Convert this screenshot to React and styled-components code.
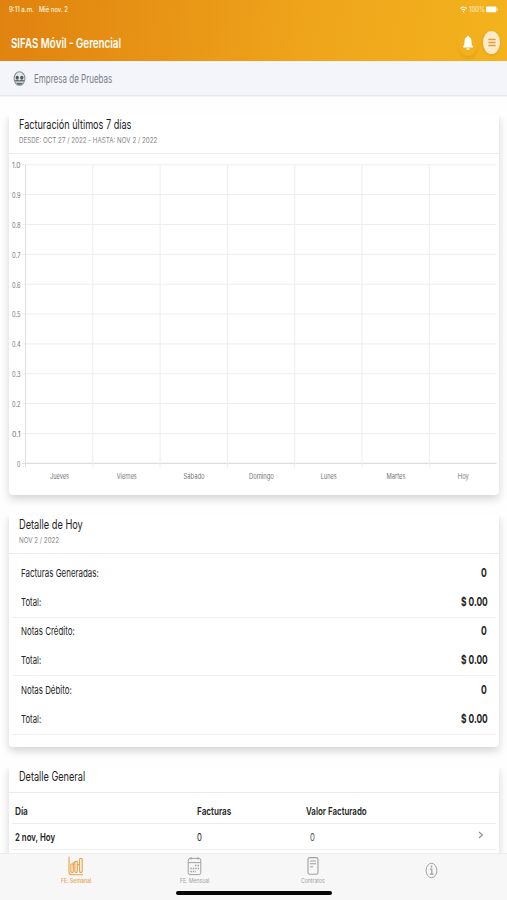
import React, { useLayoutEffect, useRef, useState } from 'react';
import styled, { createGlobalStyle } from 'styled-components';


const GlobalStyle = createGlobalStyle`
*{
    box-sizing:border-box;
}
body{
    margin:0;
    background-color:#fefefe;
    font-family:Inter,"Liberation Sans",sans-serif;
    overflow:hidden;
}
`;

const Screen = styled.div`
display:flex;
flex-direction:column;
width:507px;
height:900px;
overflow:hidden;
`;

const Header = styled.header`
flex:none;
height:61px;
background:linear-gradient(98deg,#e0820f 0%,#efa51b 62%,#f3b31d 100%);
color:white;
`;

const StatusBar = styled.div`
display:flex;
align-items:center;
justify-content:space-between;
height:18px;
padding:0 9px;
color:#fff3dc;

.side{
    display:flex;
    align-items:center;
    gap:2px;
}
.left{
    gap:5px;
}
`;

const TitleBar = styled.div`
display:flex;
align-items:center;
justify-content:space-between;
height:49px;
padding:0 7px 0 11px;

.actions{
    display:flex;
    align-items:center;
    gap:5px;
}
`;

const RoundButton = styled.button`
display:flex;
align-items:center;
justify-content:center;
width:${(props) => (props.$light ? 17 : 20)}px;
height:${(props) => (props.$light ? 23 : 27)}px;
padding:0;
border:0;
border-radius:50%;
background-color:${(props) => (props.$light ? '#fcebcb' : 'transparent')};
box-shadow:${(props) => (props.$light ? '0 1px 3px rgba(170,100,0,.22)' : '0 3px 3px rgba(170,100,0,.16)')};
`;

const CompanyBar = styled.div`
flex:none;
display:flex;
align-items:center;
gap:8px;
height:35px;
padding:2px 13px 0;
background-color:#f3f5fa;
border-bottom:1px solid #e4e7ec;
box-shadow:0 1px 1px rgba(0,0,0,.04);
color:#7c8088;
`;

const Content = styled.main`
flex:1;
display:flex;
flex-direction:column;
gap:18px;
min-height:0;
padding:17px 8px 0 9px;
overflow:hidden;
`;

const Card = styled.section`
flex:none;
height:${(props) => props.$height}px;
background-color:white;
border-radius:4px;
box-shadow:0 4px 9px rgba(0,0,0,.17);
clip-path:inset(3px -12px -18px -12px);
`;

const CardHeader = styled.div`
display:flex;
flex-direction:column;
height:${(props) => (props.$small ? 28 : 41)}px;
padding:4px 9.5px 0;
border-bottom:1px solid #ebebeb;
color:#1e1e1e;

.sub{
    display:flex;
    padding-top:1px;
    color:#858585;
}
`;

const Group = styled.div`
height:${(props) => props.$height}px;
margin:0 3px;
padding:${(props) => props.$top}px 9px 0;
border-bottom:1px solid #f0f0f0;
`;

const Line = styled.div`
display:flex;
align-items:center;
justify-content:space-between;
height:29px;
padding-bottom:2px;
color:#242424;
`;

const TableRow = styled.div`
display:grid;
grid-template-columns:182px 109px 1fr 9px;
align-items:center;
height:${(props) => props.$height}px;
margin:0 3px;
padding:${(props) => props.$top}px 9px 0 3px;
border-bottom:1px solid #ececec;
color:#242424;

.value{
    color:#555;
    padding-left:${(props) => props.$indent || 0}px;
}
`;

const TabBar = styled.nav`
flex:none;
height:47px;
background-color:#f7f7f7;
border-top:1px solid #ececec;
display:flex;
flex-direction:column;
align-items:center;

.tabs{
    display:grid;
    grid-template-columns:repeat(4,118.6px);
    width:100%;
    height:37px;
    padding-left:16.5px;
}
.home{
    width:156px;
    height:4px;
    border-radius:2px;
    background-color:#050505;
}
`;

const Tab = styled.div`
display:flex;
flex-direction:column;
align-items:center;
justify-content:${(props) => (props.$alone ? 'center' : 'flex-start')};
gap:1px;
padding-top:${(props) => (props.$alone ? 0 : 2)}px;
padding-bottom:${(props) => (props.$alone ? 4 : 0)}px;
color:${(props) => (props.$active ? '#eba145' : '#a0a0a0')};
`;

const LabelBox = styled.span`
display:block;
flex:none;
width:${(props) => props.$width}px;
height:${(props) => props.$line}px;
line-height:${(props) => props.$line}px;
font-size:${(props) => props.$size}px;
font-weight:${(props) => props.$weight};

span{
    display:inline-block;
    white-space:nowrap;
    transform-origin:0 50%;
}
`;

// Condenses its text so that it fills the given width
const Label = ({ width, size, weight = 400, line, children }) => {
    const text = useRef(null);
    const [scale, setScale] = useState(1);

    useLayoutEffect(() => {
        setScale(width / text.current.offsetWidth);
    }, [width, children]);

    return (
        <LabelBox $width={width} $size={size} $weight={weight} $line={line || Math.round(size * 1.3)}>
            <span ref={text} style={{ transform: `scaleX(${scale})` }}>{children}</span>
        </LabelBox>
    );
};

const days = [
    ['Jueves', 19], ['Viernes', 20], ['Sábado', 21], ['Domingo', 25],
    ['Lunes', 16], ['Martes', 19], ['Hoy', 11],
];
const ticks = ['1.0', '0.9', '0.8', '0.7', '0.6', '0.5', '0.4', '0.3', '0.2', '0.1', '0'];

const ChartSvg = styled.svg`
display:block;

text{
    font-size:7.4px;
    fill:#727272;
}
`;

const Chart = () => (
    <ChartSvg width="490" height="340" viewBox="0 0 490 340">
        {ticks.map((t, i) => (
            <g key={t}>
                <line x1="13" x2="487.5" y1={10.8 + i * 29.85} y2={10.8 + i * 29.85} stroke={t === '0' ? '#d6d6d6' : '#ededed'} />
                <text x={t === '0' ? 8 : 3} y={14.2 + i * 29.85} textLength={t === '0' ? 3.4 : 8.5} lengthAdjust="spacingAndGlyphs">{t}</text>
            </g>
        ))}
        {[0, 1, 2, 3, 4, 5, 6].map((i) => (
            <line key={i} x1={16.5 + i * 67.3} x2={16.5 + i * 67.3} y1="11" y2="313.5" stroke={i === 0 ? '#dedede' : '#ededed'} />
        ))}
        {days.map(([day, w], i) => (
            <text key={day} x={50.5 + i * 67.3 - w / 2} y="324.6" textLength={w} lengthAdjust="spacingAndGlyphs">{day}</text>
        ))}
    </ChartSvg>
);

const details = [
    ['Facturas Generadas:', 78, 64, 6],
    ['Notas Crédito:', 54, 58, 0],
    ['Notas Débito:', 51, 59, 1],
];

const App = () => {
    return (
        <Screen>
            <GlobalStyle />
            <Header>
                <StatusBar>
                    <div className="side left">
                        <Label width={25} size={7.3} weight={500}>9:11 a.m.</Label>
                        <Label width={29} size={7.3} weight={500}>Mié nov. 2</Label>
                    </div>
                    <div className="side">
                        <svg width="7" height="7" viewBox="0 0 6 6" fill="none" stroke="white">
                            <path d="M.3 2.1Q3 -.4 5.7 2.1M1.5 3.5Q3 2.2 4.5 3.5" strokeWidth="1" />
                            <circle cx="3" cy="4.9" r=".7" fill="white" stroke="none" />
                        </svg>
                        <Label width={15.5} size={7.3}>100%</Label>
                        <svg width="12" height="7" viewBox="0 0 12 7" fill="white">
                            <rect x="0" y=".5" width="10.4" height="5.8" rx="1.2" />
                            <rect x="10.9" y="2.4" width=".8" height="2" />
                        </svg>
                    </div>
                </StatusBar>
                <TitleBar>
                    <Label width={110} size={13} weight={600} line={16}>SIFAS Móvil - Gerencial</Label>
                    <div className="actions">
                        <RoundButton aria-label="Notificaciones">
                            <svg width="12" height="16" viewBox="0 0 12 16" fill="white">
                                <path d="M6 .8C6.7.8 7.1 1.3 7.1 2C8.9 2.7 9.5 4.4 9.5 6.7C9.5 9.4 10 10.4 10.9 11.3V12.4H1.1V11.3C2 10.4 2.5 9.4 2.5 6.7C2.5 4.4 3.1 2.7 4.9 2C4.9 1.3 5.3.8 6 .8Z" />
                                <path d="M4.4 13.2H7.6C7.5 14.5 6.8 15.1 6 15.1S4.5 14.5 4.4 13.2Z" />
                            </svg>
                        </RoundButton>
                        <RoundButton $light aria-label="Menú">
                            <svg width="8" height="9" viewBox="0 0 8 9" stroke="#e39a3a" strokeWidth="1.4">
                                <path d="M.4 1.5H7.6M.4 4.5H7.6M.4 7.5H7.6" />
                            </svg>
                        </RoundButton>
                    </div>
                </TitleBar>
            </Header>

            <CompanyBar>
                <svg width="13" height="16" viewBox="0 0 13 16">
                    <ellipse cx="6.5" cy="7.5" rx="5.4" ry="6.8" fill="#e3e6e9" stroke="#8a9197" strokeWidth="1.1" />
                    <ellipse cx="4.2" cy="6.6" rx="1.6" ry="1.9" fill="#4f5860" />
                    <ellipse cx="8.8" cy="6.6" rx="1.6" ry="1.9" fill="#4f5860" />
                    <path d="M1.8 9.4Q4.2 7.4 6.5 9.4Q8.8 7.4 11.2 9.4L10.6 10.6H2.4ZM3.2 11.8H9.8Q8.6 14 6.5 14Q4.4 14 3.2 11.8Z" fill="#646d74" />
                </svg>
                <Label width={78} size={11.5}>Empresa de Pruebas</Label>
            </CompanyBar>

            <Content>
                <Card $height={382}>
                    <CardHeader>
                        <Label width={112.5} size={12.8} line={16}>Facturación últimos 7 días</Label>
                        <div className="sub">
                            <Label width={138.5} size={7.7} line={14}>DESDE: OCT 27 / 2022 - HASTA: NOV 2 / 2022</Label>
                        </div>
                    </CardHeader>
                    <Chart />
                </Card>

                <Card $height={234}>
                    <CardHeader>
                        <Label width={63.5} size={12.8} line={16}>Detalle de Hoy</Label>
                        <div className="sub">
                            <Label width={40.5} size={7.7} line={14}>NOV 2 / 2022</Label>
                        </div>
                    </CardHeader>
                    {details.map(([name, w, height, top]) => (
                        <Group key={name} $height={height} $top={top}>
                            <Line>
                                <Label width={w} size={11} line={15}>{name}</Label>
                                <Label width={6} size={11.4} line={15} weight={700}>0</Label>
                            </Line>
                            <Line>
                                <Label width={20.5} size={11} line={15}>Total:</Label>
                                <Label width={26.5} size={11.4} line={15} weight={700}>$ 0.00</Label>
                            </Line>
                        </Group>
                    ))}
                </Card>

                <Card $height={120}>
                    <CardHeader $small>
                        <Label width={66.5} size={12.8} line={16}>Detalle General</Label>
                    </CardHeader>
                    <TableRow $height={31} $top={7}>
                        <Label width={13} size={10.8} weight={600}>Día</Label>
                        <Label width={34} size={10.8} weight={600}>Facturas</Label>
                        <Label width={61} size={10.8} weight={600}>Valor Facturado</Label>
                    </TableRow>
                    <TableRow $height={26} $top={2} $indent={4}>
                        <Label width={40} size={10.8} weight={600}>2 nov, Hoy</Label>
                        <Label width={5} size={10.8}>0</Label>
                        <div className="value"><Label width={5} size={10.8}>0</Label></div>
                        <svg width="6" height="13" viewBox="0 0 6 13" fill="none" stroke="#8d8d8d" strokeWidth="1.1">
                            <path d="M1 1L4.4 4L1 7" />
                        </svg>
                    </TableRow>
                </Card>
            </Content>

            <TabBar>
                <div className="tabs">
                    <Tab $active>
                        <svg width="16" height="20" viewBox="0 0 16 20" fill="none" stroke="currentColor" strokeWidth="1.1">
                            <path d="M1 .8V15.6Q1 18.8 3.5 18.8H15" />
                            <rect x="2.9" y="8" width="2.4" height="8.4" rx=".8" />
                            <rect x="6.9" y="5.4" width="2.4" height="11" rx=".8" />
                            <rect x="11.6" y="2.5" width="2.6" height="13.9" rx=".8" />
                            <path d="M5.3 12V6.8H6.9M9.3 8.6H11.6" />
                        </svg>
                        <Label width={30} size={6.2} line={8} weight={500}>FE. Semanal</Label>
                    </Tab>
                    <Tab>
                        <svg width="15" height="20" viewBox="0 0 15 20" fill="none" stroke="currentColor" strokeWidth="1">
                            <rect x="1.2" y="2.4" width="12.6" height="16.2" rx="2" />
                            <path d="M1.2 6.6H13.8M4 1V3.6M11 1V3.6" />
                            <path d="M8 9.5H12M3.3 12.5H12M3.3 15.5H9" strokeDasharray="1.5 1" strokeWidth="1.4" />
                        </svg>
                        <Label width={29.5} size={6.2} line={8}>FE. Mensual</Label>
                    </Tab>
                    <Tab>
                        <svg width="12" height="20" viewBox="0 0 12 20" fill="none" stroke="currentColor" strokeWidth="1.1">
                            <rect x="1" y="1.6" width="10" height="16.6" rx="1.8" />
                            <path d="M3 5H9M3 7.8H9M3 10.8H6" />
                        </svg>
                        <Label width={24} size={6.2} line={8}>Contratos</Label>
                    </Tab>
                    <Tab $alone>
                        <svg width="13" height="17" viewBox="0 0 13 17" fill="none" stroke="currentColor" strokeWidth="1">
                            <ellipse cx="6.5" cy="8.5" rx="5.4" ry="7.2" />
                            <path d="M5 7.2H6.8V12.2M4.8 12.2H8.6" strokeWidth="1.2" />
                            <ellipse cx="6.5" cy="4.6" rx=".9" ry="1.1" fill="currentColor" stroke="none" />
                        </svg>
                    </Tab>
                </div>
                <div className="home"></div>
            </TabBar>
        </Screen>
    );
};

export default App;
